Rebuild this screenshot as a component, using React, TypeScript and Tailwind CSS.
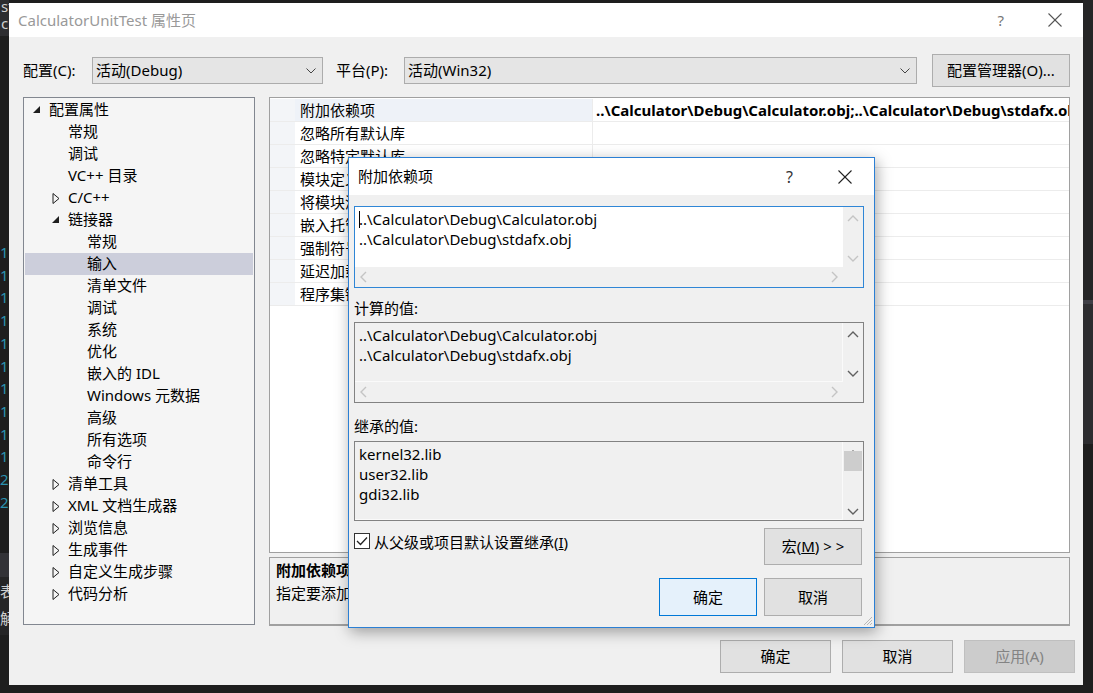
import * as React from "react";

type TreeItem = { level: 1 | 2 | 3; text: string; state?: "open" | "closed"; selected?: boolean };

const treeItems: TreeItem[] = [
  { level: 1, text: "配置属性", state: "open" },
  { level: 2, text: "常规" },
  { level: 2, text: "调试" },
  { level: 2, text: "VC++ 目录" },
  { level: 2, text: "C/C++", state: "closed" },
  { level: 2, text: "链接器", state: "open" },
  { level: 3, text: "常规" },
  { level: 3, text: "输入", selected: true },
  { level: 3, text: "清单文件" },
  { level: 3, text: "调试" },
  { level: 3, text: "系统" },
  { level: 3, text: "优化" },
  { level: 3, text: "嵌入的 IDL" },
  { level: 3, text: "Windows 元数据" },
  { level: 3, text: "高级" },
  { level: 3, text: "所有选项" },
  { level: 3, text: "命令行" },
  { level: 2, text: "清单工具", state: "closed" },
  { level: 2, text: "XML 文档生成器", state: "closed" },
  { level: 2, text: "浏览信息", state: "closed" },
  { level: 2, text: "生成事件", state: "closed" },
  { level: 2, text: "自定义生成步骤", state: "closed" },
  { level: 2, text: "代码分析", state: "closed" },
];

const indent: Record<number, string> = { 1: "pl-[8px]", 2: "pl-[27px]", 3: "pl-[46px]" };

const gridRows = [
  "附加依赖项",
  "忽略所有默认库",
  "忽略特定默认库",
  "模块定义文件",
  "将模块添加到程序集",
  "嵌入托管资源文件",
  "强制符号引用",
  "延迟加载的 DLL",
  "程序集链接资源",
];

function Chevron({ dir, color }: { dir: "up" | "down" | "left" | "right"; color: string }) {
  const pts = {
    up: "1,6 6,1 11,6",
    down: "1,1 6,6 11,1",
    left: "6,1 1,6 6,11",
    right: "1,1 6,6 1,11",
  }[dir];
  const vertical = dir === "up" || dir === "down";
  return (
    <svg width={vertical ? 12 : 7} height={vertical ? 7 : 12} viewBox={vertical ? "0 0 12 7" : "0 0 7 12"}>
      <polyline points={pts} fill="none" stroke={color} strokeWidth="1.4" />
    </svg>
  );
}

function ComboArrow() {
  return (
    <svg width="10" height="6" viewBox="0 0 10 6">
      <polyline points="0.5,0.5 5,5 9.5,0.5" fill="none" stroke="#444" strokeWidth="1" />
    </svg>
  );
}

function CloseX({ size = 14, color = "#555" }: { size?: number; color?: string }) {
  return (
    <svg width={size} height={size} viewBox="0 0 14 14">
      <line x1="0.5" y1="0.5" x2="13.5" y2="13.5" stroke={color} strokeWidth="1.1" />
      <line x1="13.5" y1="0.5" x2="0.5" y2="13.5" stroke={color} strokeWidth="1.1" />
    </svg>
  );
}

function TreeArrow({ state }: { state?: "open" | "closed" }) {
  if (state === "open")
    return (
      <svg width="8" height="8" viewBox="0 0 8 8">
        <polygon points="7,0 7,7 0,7" fill="#1e1e1e" />
      </svg>
    );
  if (state === "closed")
    return (
      <svg width="8" height="11" viewBox="0 0 8 11">
        <polygon points="1,0.5 7,5.5 1,10.5" fill="none" stroke="#1e1e1e" strokeWidth="1" />
      </svg>
    );
  return null;
}

function ListBox({
  lines,
  focused,
  white,
  hScroll,
  thumb,
  height,
  chevron,
  caret,
}: {
  lines: string[];
  focused?: boolean;
  white?: boolean;
  hScroll?: boolean;
  thumb?: boolean;
  height: string;
  chevron: string;
  caret?: boolean;
}) {
  return (
    <div
      className={`flex ${height} flex-col border bg-[#f0f0f0] ${
        focused ? "border-[#2f86d6]" : "border-[#828282]"
      }`}
    >
      <div className="flex min-h-0 flex-1">
        <div
          className={`flex-1 pl-[4px] pt-[2px] text-[15px] leading-[20px] text-black ${
            white ? "bg-white" : "border-b border-r border-[#fafafa] bg-[#f0f0f0]"
          }`}
        >
          {lines.map((line, i) => (
            <div key={i} className="whitespace-nowrap">
              {caret && i === 0 && <span className="-mr-px inline-block h-[17px] w-px bg-black align-[-3px]" />}
              {line}
            </div>
          ))}
        </div>
        <div className="flex w-[20px] flex-col items-center justify-between pb-[5px] pt-[8px]">
          <Chevron dir="up" color={chevron} />
          {thumb && <div className="-mt-[6px] mb-auto h-[20px] w-[18px] bg-[#cdcdcd]" />}
          <Chevron dir="down" color={chevron} />
        </div>
      </div>
      {hScroll && (
        <div className="flex h-[20px] items-center">
          <div className="flex flex-1 items-center justify-between px-[5px]">
            <Chevron dir="left" color="#c4c4c4" />
            <Chevron dir="right" color="#c4c4c4" />
          </div>
          <div className="w-[20px]" />
        </div>
      )}
    </div>
  );
}

function Button({
  children,
  width,
  height = "h-[33px]",
  primary,
  disabled,
}: {
  children: React.ReactNode;
  width: string;
  height?: string;
  primary?: boolean;
  disabled?: boolean;
}) {
  const tone = primary
    ? "border-[#0078d7] bg-[#e5f1fb] text-black"
    : disabled
    ? "border-[#bfbfbf] bg-[#cccccc] text-[#838383]"
    : "border-[#adadad] bg-[#e1e1e1] text-black";
  return (
    <div className={`flex ${width} ${height} items-center justify-center border text-[15px] ${tone}`}>
      {children}
    </div>
  );
}

export default function App() {
  return (
    <div className="relative flex h-[693px] w-[1093px] overflow-hidden bg-[#1e1e1e] font-['Noto_Sans','Noto_Sans_CJK_SC',sans-serif]">
      {/* editor behind, left edge */}
      <div className="flex w-[9px] flex-col overflow-hidden text-[15px] leading-[22.7px]">
        <div className="h-[36px] bg-[#2d2d30] pl-[1px] text-[#d0d0d0]">
          <div className="leading-[12px]">st</div>
          <div className="leading-[22px]">cu</div>
        </div>
        <div className="h-[205px]" />
        {["1", "1", "1", "1", "1", "1", "1", "1", "1", "1", "2", "2"].map((d, i) => (
          <div key={i} className="text-[#2b91af]">
            {d}
          </div>
        ))}
        <div className="mt-[40px] h-[24px] bg-[#333337]" />
        <div className="h-[30px] bg-[#252526] pt-[3px] text-[#d0d0d0]">表</div>
        <div className="h-[28px] bg-[#252526] text-[#d0d0d0]">解</div>
      </div>

      {/* main window */}
      <div className="mt-[3px] flex h-[682px] w-[1074px] flex-col">
        <div className="flex h-[34px] items-center bg-white pl-[9px] text-[15px] text-[#999999]">
          <span className="flex-1">CalculatorUnitTest 属性页</span>
          <span className="mr-[44px] text-[15px] text-[#777]">?</span>
          <span className="mr-[21px]">
            <CloseX />
          </span>
        </div>

        <div className="flex flex-1 flex-col bg-[#f0f0f0] pl-[14px] pr-[13px] text-[15px] text-black">
          <div className="mt-[17px] flex h-[33px] items-center">
            <span className="w-[69px]">配置(C):</span>
            <div className="flex h-[27px] w-[231px] items-center border border-[#acacac] bg-[#e5e5e5] pl-[3px] pr-[6px]">
              <span className="flex-1">活动(Debug)</span>
              <ComboArrow />
            </div>
            <span className="ml-[13px] w-[68px]">平台(P):</span>
            <div className="flex h-[27px] w-[513px] items-center border border-[#acacac] bg-[#e5e5e5] pl-[3px] pr-[6px]">
              <span className="flex-1">活动(Win32)</span>
              <ComboArrow />
            </div>
            <div className="ml-[15px] flex h-[33px] w-[138px] items-center justify-center border border-[#adadad] bg-[#e1e1e1]">
              配置管理器(O)...
            </div>
          </div>

          <div className="mt-[10px] flex gap-[14px]">
            {/* tree */}
            <div className="h-[528px] w-[233px] border border-[#828790] bg-[#f5f5f5] pt-px">
              {treeItems.map((item, i) => (
                <div
                  key={i}
                  className={`mx-px flex h-[22px] items-center ${indent[item.level]} ${
                    item.selected ? "bg-[#cccedb]" : ""
                  }`}
                >
                  <span className="flex w-[16px] items-center">
                    <TreeArrow state={item.state} />
                  </span>
                  <span className="-mt-[2px] whitespace-nowrap">{item.text}</span>
                </div>
              ))}
            </div>

            {/* property grid + description */}
            <div className="flex w-[801px] flex-col gap-[4px]">
              <div className="h-[456px] overflow-hidden border border-[#a0a0a0] bg-white pt-px">
                {gridRows.map((label, i) => (
                  <div key={i} className="flex h-[23px] border-b border-[#ececec]">
                    <div className="w-[25px] bg-[#f3f5f8]" />
                    <div className={`flex w-[297px] items-center pl-[5px] ${i === 0 ? "bg-[#eef2f8]" : "bg-white"}`}>
                      {label}
                    </div>
                    <div className="flex flex-1 items-center overflow-hidden whitespace-nowrap border-l border-[#ececec] pl-[3px] font-bold">
                      {i === 0 ? "..\\Calculator\\Debug\\Calculator.obj;..\\Calculator\\Debug\\stdafx.obj;%(AdditionalDependencies)" : ""}
                    </div>
                  </div>
                ))}
              </div>
              <div className="h-[69px] border border-b-2 border-[#a0a0a0] bg-[#f0f0f0] pl-[6px] pt-[1px] leading-[23px]">
                <div className="font-bold">附加依赖项</div>
                <div>指定要添加到链接命令行的附加项。[例如 kernel32.lib]</div>
              </div>
            </div>
          </div>

          <div className="-mr-[5px] mt-[14px] flex justify-end gap-[11px]">
            <Button width="w-[111px]">确定</Button>
            <Button width="w-[111px]">取消</Button>
            <Button width="w-[111px]" disabled>
              应用(A)
            </Button>
          </div>
        </div>
      </div>

      {/* editor behind, right edge */}
      <div className="flex flex-1 flex-col">
        <div className="h-[300px] bg-[#252526]" />
        <div className="h-[4px] bg-[#3f3f46]" />
        <div className="h-[140px] bg-[#2d2d30]" />
        <div className="flex-1 bg-[#1e1e1e]" />
      </div>

      {/* modal dialog */}
      <div className="absolute left-[348px] top-[157px] flex h-[471px] w-[527px] flex-col border border-[#2b7fd4] bg-[#f0f0f0] text-[15px] text-black shadow-[2px_4px_14px_rgba(0,0,0,0.35)]">
        <div className="flex h-[37px] items-center bg-white pl-[9px]">
          <span className="flex-1">附加依赖项</span>
          <span className="mr-[45px] text-[16px] text-[#333]">?</span>
          <span className="mr-[22px]">
            <CloseX size={14} color="#222" />
          </span>
        </div>
        <div className="flex flex-1 flex-col pl-[5px] pr-[10px]">
          <div className="mt-[11px]">
            <ListBox
              lines={["..\\Calculator\\Debug\\Calculator.obj", "..\\Calculator\\Debug\\stdafx.obj"]}
              focused
              white
              hScroll
              caret
              height="h-[82px]"
              chevron="#c4c4c4"
            />
          </div>
          <div className="mt-[10px] h-[20px] leading-[20px]">计算的值:</div>
          <div className="mt-[4px]">
            <ListBox
              lines={["..\\Calculator\\Debug\\Calculator.obj", "..\\Calculator\\Debug\\stdafx.obj"]}
              hScroll
              height="h-[81px]"
              chevron="#606060"
            />
          </div>
          <div className="mt-[13px] h-[20px] leading-[20px]">继承的值:</div>
          <div className="mt-[5px]">
            <ListBox
              lines={["kernel32.lib", "user32.lib", "gdi32.lib"]}
              thumb
              height="h-[80px] overflow-hidden"
              chevron="#606060"
            />
          </div>
          <div className="mt-[7px] flex items-start pr-[2px]">
            <div className="mt-[5px] flex h-[16px] w-[16px] items-center justify-center border border-[#333] bg-white">
              <svg width="12" height="10" viewBox="0 0 12 10">
                <polyline points="1,5 4.5,8.5 11,1.5" fill="none" stroke="#222" strokeWidth="1.3" />
              </svg>
            </div>
            <span className="ml-[4px] mt-[3px] flex-1">
              从父级或项目默认设置继承(<span className="underline">I</span>)
            </span>
            <Button width="w-[98px]" height="h-[37px]">
              <span>
                宏(<span className="underline">M</span>) &gt; &gt;
              </span>
            </Button>
          </div>
          <div className="mt-[13px] flex justify-end gap-[7px] pr-[2px]">
            <Button width="w-[98px]" height="h-[38px]" primary>
              确定
            </Button>
            <Button width="w-[98px]" height="h-[38px]">
              取消
            </Button>
          </div>
        </div>
        <svg className="absolute bottom-[1px] right-[1px]" width="11" height="11" viewBox="0 0 11 11">
          <line x1="10" y1="2" x2="2" y2="10" stroke="#b8b8b8" strokeWidth="1" />
          <line x1="10" y1="5" x2="5" y2="10" stroke="#b8b8b8" strokeWidth="1" />
          <line x1="10" y1="8" x2="8" y2="10" stroke="#b8b8b8" strokeWidth="1" />
        </svg>
      </div>
    </div>
  );
}
